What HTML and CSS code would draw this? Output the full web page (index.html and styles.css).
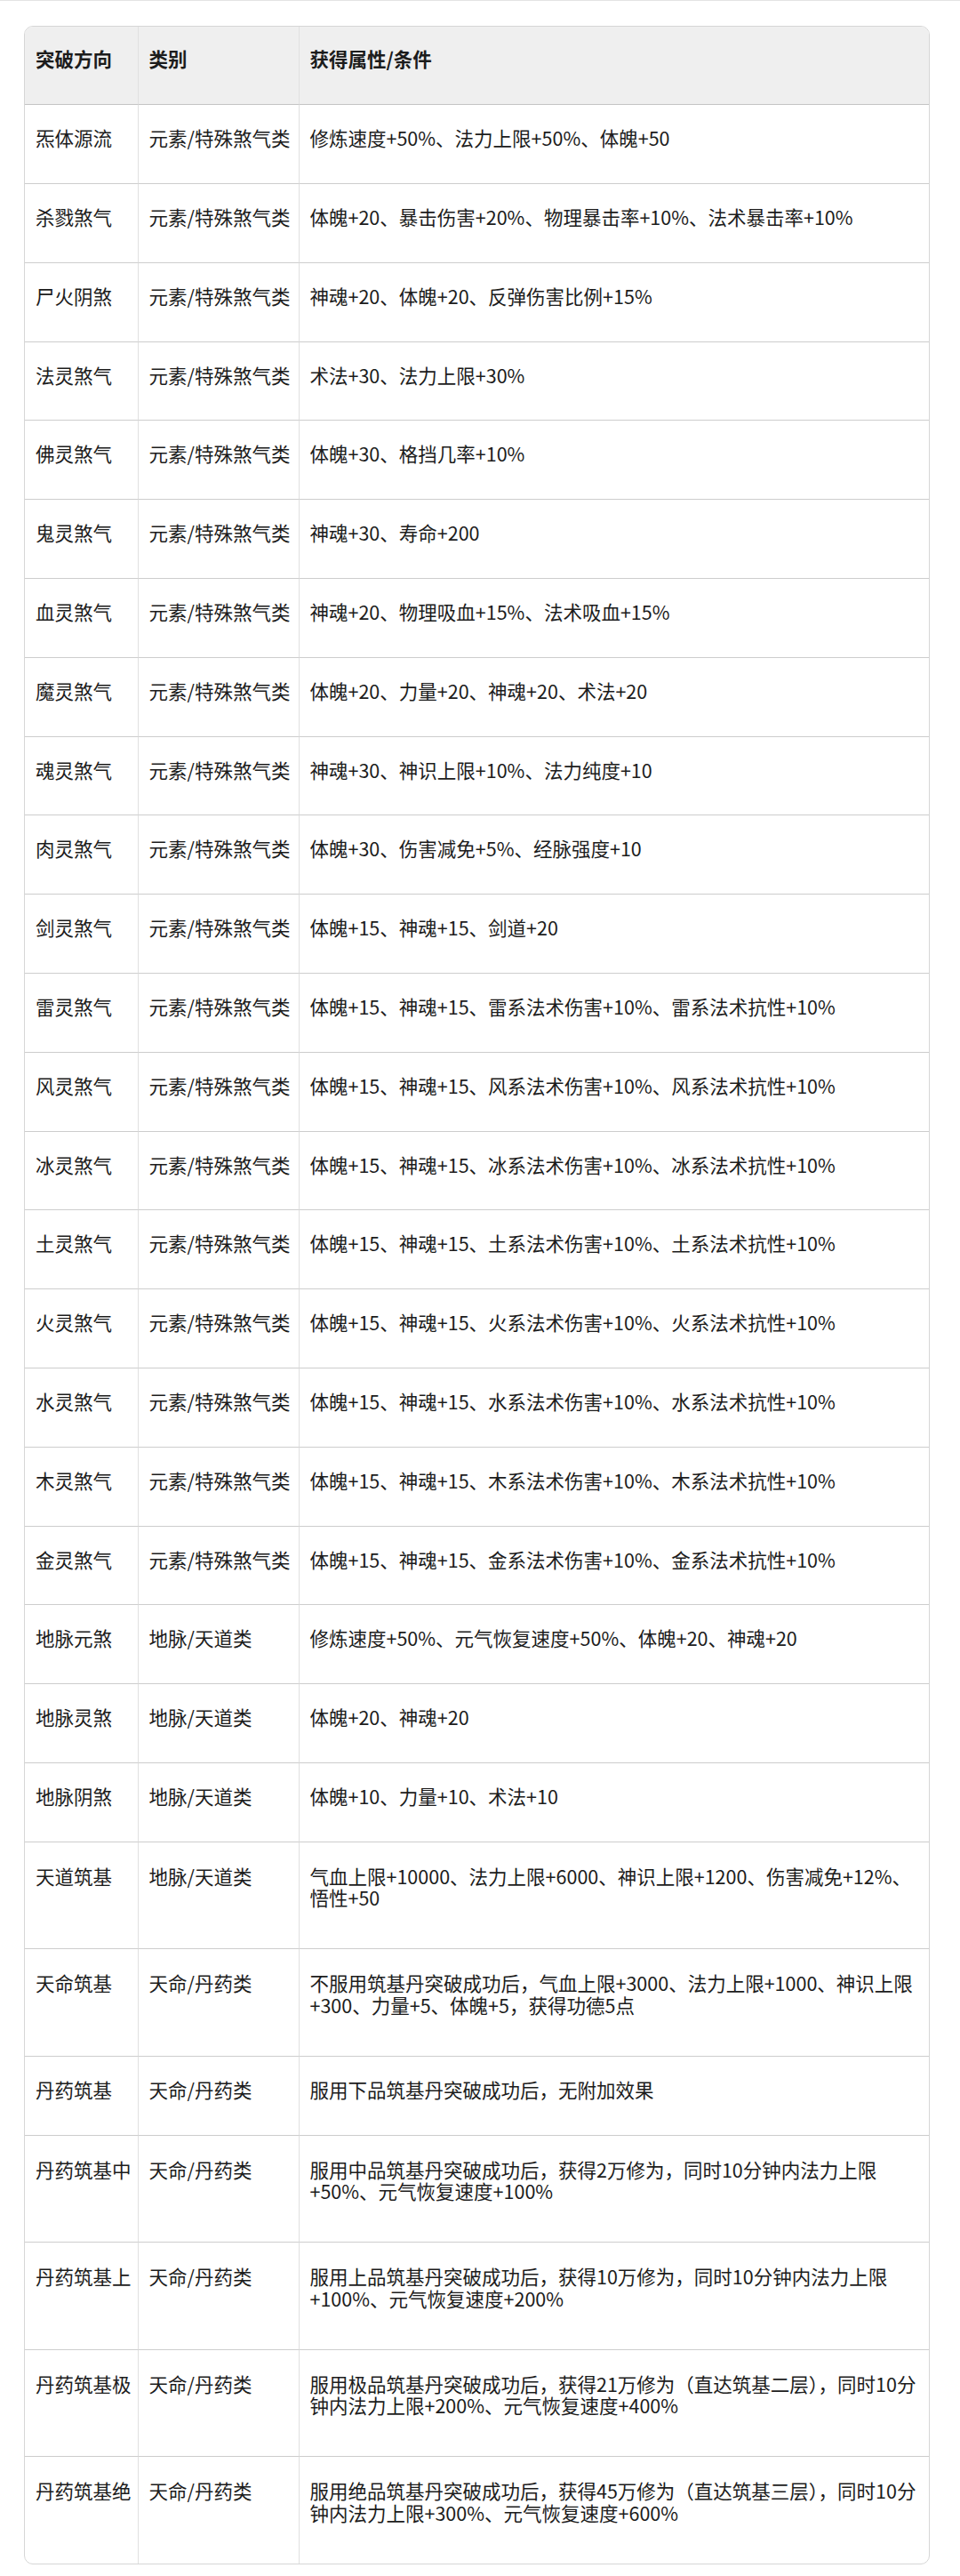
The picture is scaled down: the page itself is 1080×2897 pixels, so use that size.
FILE: index.html
```html
<!DOCTYPE html>
<html lang="zh-CN">
<head>
<meta charset="utf-8">
<title>突破方向</title>
<link rel="stylesheet" href="styles.css">
</head>
<body>
<div class="top-rule"></div>
<main class="page">
  <div class="table-wrap">
    <table class="data">
      <colgroup>
        <col class="c1">
        <col class="c2">
        <col class="c3">
      </colgroup>
      <thead>
        <tr><th>突破方向</th><th>类别</th><th>获得属性/条件</th></tr>
      </thead>
      <tbody>
        <tr><td>炁体源流</td><td>元素/特殊煞气类</td><td>修炼速度+50%、法力上限+50%、体魄+50</td></tr>
        <tr><td>杀戮煞气</td><td>元素/特殊煞气类</td><td>体魄+20、暴击伤害+20%、物理暴击率+10%、法术暴击率+10%</td></tr>
        <tr><td>尸火阴煞</td><td>元素/特殊煞气类</td><td>神魂+20、体魄+20、反弹伤害比例+15%</td></tr>
        <tr><td>法灵煞气</td><td>元素/特殊煞气类</td><td>术法+30、法力上限+30%</td></tr>
        <tr><td>佛灵煞气</td><td>元素/特殊煞气类</td><td>体魄+30、格挡几率+10%</td></tr>
        <tr><td>鬼灵煞气</td><td>元素/特殊煞气类</td><td>神魂+30、寿命+200</td></tr>
        <tr><td>血灵煞气</td><td>元素/特殊煞气类</td><td>神魂+20、物理吸血+15%、法术吸血+15%</td></tr>
        <tr><td>魔灵煞气</td><td>元素/特殊煞气类</td><td>体魄+20、力量+20、神魂+20、术法+20</td></tr>
        <tr><td>魂灵煞气</td><td>元素/特殊煞气类</td><td>神魂+30、神识上限+10%、法力纯度+10</td></tr>
        <tr><td>肉灵煞气</td><td>元素/特殊煞气类</td><td>体魄+30、伤害减免+5%、经脉强度+10</td></tr>
        <tr><td>剑灵煞气</td><td>元素/特殊煞气类</td><td>体魄+15、神魂+15、剑道+20</td></tr>
        <tr><td>雷灵煞气</td><td>元素/特殊煞气类</td><td>体魄+15、神魂+15、雷系法术伤害+10%、雷系法术抗性+10%</td></tr>
        <tr><td>风灵煞气</td><td>元素/特殊煞气类</td><td>体魄+15、神魂+15、风系法术伤害+10%、风系法术抗性+10%</td></tr>
        <tr><td>冰灵煞气</td><td>元素/特殊煞气类</td><td>体魄+15、神魂+15、冰系法术伤害+10%、冰系法术抗性+10%</td></tr>
        <tr><td>土灵煞气</td><td>元素/特殊煞气类</td><td>体魄+15、神魂+15、土系法术伤害+10%、土系法术抗性+10%</td></tr>
        <tr><td>火灵煞气</td><td>元素/特殊煞气类</td><td>体魄+15、神魂+15、火系法术伤害+10%、火系法术抗性+10%</td></tr>
        <tr><td>水灵煞气</td><td>元素/特殊煞气类</td><td>体魄+15、神魂+15、水系法术伤害+10%、水系法术抗性+10%</td></tr>
        <tr><td>木灵煞气</td><td>元素/特殊煞气类</td><td>体魄+15、神魂+15、木系法术伤害+10%、木系法术抗性+10%</td></tr>
        <tr><td>金灵煞气</td><td>元素/特殊煞气类</td><td>体魄+15、神魂+15、金系法术伤害+10%、金系法术抗性+10%</td></tr>
        <tr><td>地脉元煞</td><td>地脉/天道类</td><td>修炼速度+50%、元气恢复速度+50%、体魄+20、神魂+20</td></tr>
        <tr><td>地脉灵煞</td><td>地脉/天道类</td><td>体魄+20、神魂+20</td></tr>
        <tr><td>地脉阴煞</td><td>地脉/天道类</td><td>体魄+10、力量+10、术法+10</td></tr>
        <tr class="tall"><td>天道筑基</td><td>地脉/天道类</td><td>气血上限+10000、法力上限+6000、神识上限+1200、伤害减免+12%、悟性+50</td></tr>
        <tr class="tall"><td>天命筑基</td><td>天命/丹药类</td><td>不服用筑基丹突破成功后，气血上限+3000、法力上限+1000、神识上限+300、力量+5、体魄+5，获得功德5点</td></tr>
        <tr><td>丹药筑基</td><td>天命/丹药类</td><td>服用下品筑基丹突破成功后，无附加效果</td></tr>
        <tr class="tall"><td>丹药筑基中</td><td>天命/丹药类</td><td>服用中品筑基丹突破成功后，获得2万修为，同时10分钟内法力上限+50%、元气恢复速度+100%</td></tr>
        <tr class="tall"><td>丹药筑基上</td><td>天命/丹药类</td><td>服用上品筑基丹突破成功后，获得10万修为，同时10分钟内法力上限+100%、元气恢复速度+200%</td></tr>
        <tr class="tall"><td>丹药筑基极</td><td>天命/丹药类</td><td>服用极品筑基丹突破成功后，获得21万修为（直达筑基二层），同时10分钟内法力上限+200%、元气恢复速度+400%</td></tr>
        <tr class="tall"><td>丹药筑基绝</td><td>天命/丹药类</td><td>服用绝品筑基丹突破成功后，获得45万修为（直达筑基三层），同时10分钟内法力上限+300%、元气恢复速度+600%</td></tr>
      </tbody>
    </table>
  </div>
</main>
</body>
</html>
```

FILE: styles.css
```css
html, body {
  margin: 0;
  padding: 0;
  background: #ffffff;
}

body {
  font-family: "Noto Sans CJK SC", "Noto Sans", sans-serif;
  color: #1c1c1c;
  font-size: 21.5px;
  line-height: 24.5px;
}

.top-rule {
  height: 1px;
  background: #e3e3e3;
}

.page {
  padding: 28px 34px 0 27px;
}

.table-wrap {
  border: 1px solid #d6d6d6;
  border-radius: 10px;
  overflow: hidden;
}

.data {
  width: 100%;
  border-collapse: separate;
  border-spacing: 0;
  table-layout: fixed;
}

.data col.c1 { width: 127.5px; }
.data col.c2 { width: 181px; }

.data th,
.data td {
  text-align: left;
  vertical-align: top;
  padding: 25px 12px 38.3px 12px;
  border-right: 1px solid #e0e0e0;
}

.data th:last-child,
.data td:last-child {
  border-right: none;
}

.data td:first-child,
.data td:nth-child(2),
.data th:first-child {
  white-space: nowrap;
}

.data th {
  background: #efefef;
  font-weight: 700;
  padding-top: 23.5px;
  padding-bottom: 39.3px;
  border-bottom: 1px solid #c4c4c4;
}

.data tbody td {
  border-bottom: 1px solid #cdcdcd;
}

.data tbody tr:last-child td {
  border-bottom: none;
}

.data tbody tr.tall td {
  padding-top: 26px;
  padding-bottom: 44.5px;
}
```
